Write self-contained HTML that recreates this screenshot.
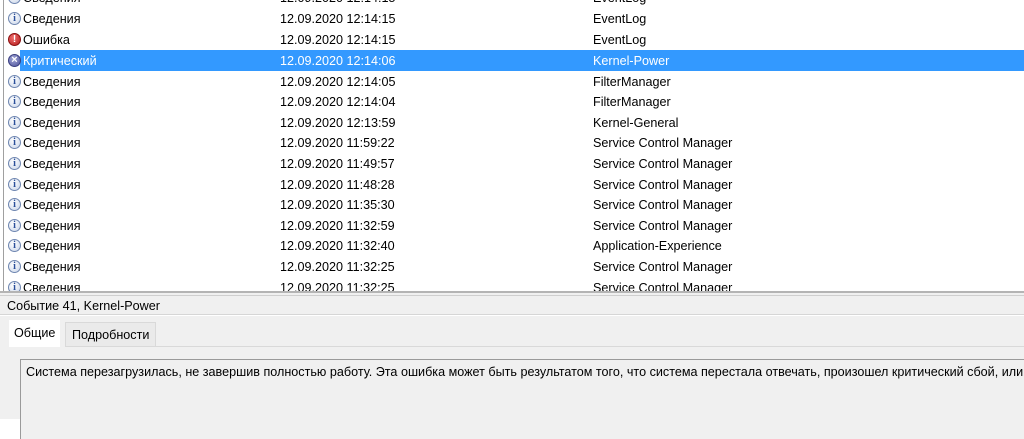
<!DOCTYPE html>
<html><head><meta charset="utf-8"><style>
*{margin:0;padding:0;box-sizing:border-box}
body{width:1024px;height:419px;overflow:hidden;background:#fff;font-family:"Liberation Sans","DejaVu Sans",sans-serif;font-size:12.6px;color:#000;position:relative}
.lb{position:absolute;left:3px;top:0;width:1px;height:291px;background:#a0a0a0}
.row{position:absolute;left:4px;right:0;height:20.6px;line-height:22px;white-space:nowrap}
.row.sel{background:#3399ff;color:#fff;left:20px}
.row span{position:absolute}
.c1{left:19px}.c2{left:276px}.c3{left:589px}
.sel .c1{left:3px}.sel .c2{left:260px}.sel .c3{left:573px}
.ic{position:absolute;left:4px;width:13px;height:13px;border-radius:50%;display:block;text-align:center;font-style:normal;font-weight:bold;line-height:11px}
.info{background:radial-gradient(circle at 40% 35%,#fff,#c8d4e8);border:1px solid #6f86b0;color:#2a4f9a;font-family:"Liberation Serif",serif;font-size:10px}
.err{background:radial-gradient(circle at 40% 35%,#f27070,#b01818);border:1px solid #8a1010;color:#fff;font-size:10px}
.crit{background:radial-gradient(circle at 40% 35%,#a5a9d8,#4a4f98);border:1px solid #3b3f80;color:#fff;font-size:11px;line-height:10px}
.bottom{position:absolute;left:0;top:291px;width:1024px;height:128px;background:#f0f0f0}
.l{position:absolute;left:0;right:0;height:1px}
.tab{position:absolute;top:322px;height:24px;line-height:22px;padding:0 6px}
.box{position:absolute;left:20px;top:359px;right:-10px;height:80px;background:#f0f0f0;border-left:1px solid #9a9a9a;border-top:1px solid #9a9a9a;padding:5px 0 0 5px;white-space:nowrap}
</style></head><body>
<div class="lb"></div>
<div class="row" style="top:-12.6px"><i class="ic info" style="top:4px">i</i><span class="c1">Сведения</span><span class="c2">12.09.2020 12:14:15</span><span class="c3">EventLog</span></div>
<div class="row" style="top:8px"><i class="ic info" style="top:4px">i</i><span class="c1">Сведения</span><span class="c2">12.09.2020 12:14:15</span><span class="c3">EventLog</span></div>
<div class="row" style="top:29px"><i class="ic err" style="top:4px">!</i><span class="c1">Ошибка</span><span class="c2">12.09.2020 12:14:15</span><span class="c3">EventLog</span></div>
<div class="row sel" style="top:50px"><span class="c1">Критический</span><span class="c2">12.09.2020 12:14:06</span><span class="c3">Kernel-Power</span></div>
<i class="ic crit" style="top:54px;left:8px">×</i>
<div class="row" style="top:70.6px"><i class="ic info" style="top:4px">i</i><span class="c1">Сведения</span><span class="c2">12.09.2020 12:14:05</span><span class="c3">FilterManager</span></div>
<div class="row" style="top:91.2px"><i class="ic info" style="top:4px">i</i><span class="c1">Сведения</span><span class="c2">12.09.2020 12:14:04</span><span class="c3">FilterManager</span></div>
<div class="row" style="top:111.8px"><i class="ic info" style="top:4px">i</i><span class="c1">Сведения</span><span class="c2">12.09.2020 12:13:59</span><span class="c3">Kernel-General</span></div>
<div class="row" style="top:132.4px"><i class="ic info" style="top:4px">i</i><span class="c1">Сведения</span><span class="c2">12.09.2020 11:59:22</span><span class="c3">Service Control Manager</span></div>
<div class="row" style="top:153px"><i class="ic info" style="top:4px">i</i><span class="c1">Сведения</span><span class="c2">12.09.2020 11:49:57</span><span class="c3">Service Control Manager</span></div>
<div class="row" style="top:173.6px"><i class="ic info" style="top:4px">i</i><span class="c1">Сведения</span><span class="c2">12.09.2020 11:48:28</span><span class="c3">Service Control Manager</span></div>
<div class="row" style="top:194.2px"><i class="ic info" style="top:4px">i</i><span class="c1">Сведения</span><span class="c2">12.09.2020 11:35:30</span><span class="c3">Service Control Manager</span></div>
<div class="row" style="top:214.8px"><i class="ic info" style="top:4px">i</i><span class="c1">Сведения</span><span class="c2">12.09.2020 11:32:59</span><span class="c3">Service Control Manager</span></div>
<div class="row" style="top:235.4px"><i class="ic info" style="top:4px">i</i><span class="c1">Сведения</span><span class="c2">12.09.2020 11:32:40</span><span class="c3">Application-Experience</span></div>
<div class="row" style="top:256px"><i class="ic info" style="top:4px">i</i><span class="c1">Сведения</span><span class="c2">12.09.2020 11:32:25</span><span class="c3">Service Control Manager</span></div>
<div class="row" style="top:276.6px"><i class="ic info" style="top:4px">i</i><span class="c1">Сведения</span><span class="c2">12.09.2020 11:32:25</span><span class="c3">Service Control Manager</span></div>
<div class="bottom"></div>
<div class="l" style="top:291px;background:#b4b4b4;height:2px"></div>
<div class="l" style="top:295px;background:#cfcfcf"></div>
<div style="position:absolute;left:7px;top:297px;line-height:18px">Событие 41, Kernel-Power</div>
<div class="l" style="top:314px;background:#d6d6d6"></div>
<div class="l" style="top:315px;background:#fff"></div>
<div class="tab" style="left:9px;background:#fff;top:320px;height:27px;padding:0 5px;line-height:26px">Общие</div>
<div class="tab" style="left:65px;background:#eaeaea;border:1px solid #d9d9d9;border-bottom:none;line-height:24px">Подробности</div>
<div class="l" style="top:346px;background:#d9d9d9;left:65px"></div>
<div class="box">Система перезагрузилась, не завершив полностью работу. Эта ошибка может быть результатом того, что система перестала отвечать, произошел критический сбой, или</div>
</body></html>
